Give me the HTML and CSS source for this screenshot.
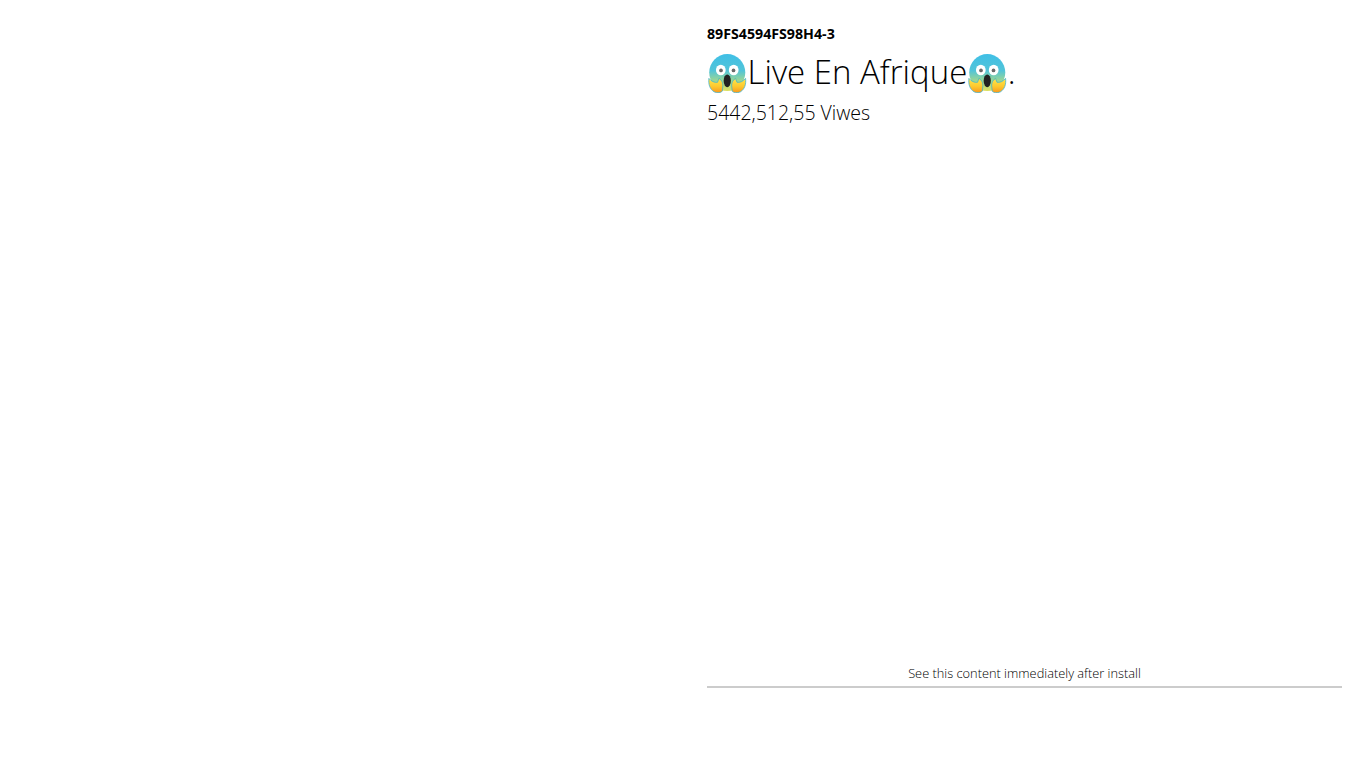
FILE: index.html
```html
<!DOCTYPE html>
<html>
<head>
  <title>Live En Afrique</title>
  <link rel="stylesheet" href="styles.css">
</head>
<body>
  <svg class="defs" width="0" height="0">
    <defs>
      <linearGradient id="faceFill" x1="0" y1="0" x2="0" y2="1">
        <stop offset="0" stop-color="#3fbfe6"/>
        <stop offset="0.45" stop-color="#52c4d8"/>
        <stop offset="0.75" stop-color="#a3d98c"/>
        <stop offset="1" stop-color="#dfe05f"/>
      </linearGradient>
      <linearGradient id="handFill" x1="0" y1="0" x2="0" y2="1">
        <stop offset="0" stop-color="#fde74c"/>
        <stop offset="0.55" stop-color="#fdc92f"/>
        <stop offset="1" stop-color="#f8991d"/>
      </linearGradient>
      <symbol id="scream" viewBox="0 0 40 40">
        <ellipse cx="20" cy="19" rx="18.500" ry="19" fill="url(#faceFill)"/>
        <ellipse cx="13.400" cy="16.500" rx="5" ry="5.400" fill="#fff"/>
        <ellipse cx="26.600" cy="16.500" rx="5" ry="5.400" fill="#fff"/>
        <circle cx="13.600" cy="16.800" r="1.900" fill="#6a6a6a"/>
        <circle cx="26.400" cy="16.800" r="1.900" fill="#6a6a6a"/>
        <ellipse cx="20" cy="27.500" rx="3.700" ry="6.500" fill="#222"/>
        <path d="M1.200 25 C0.500 31 2 36 6.500 38.800 C10 40.400 13.500 39.800 15 38 L15.500 32 C15.500 29 14 26.500 11.500 25 L10 29 C7 29.500 3.500 28 1.200 25 Z" fill="url(#handFill)" stroke="#3fb3cf" stroke-width="0.800"/>
        <path d="M38.800 25 C39.500 31 38 36 33.500 38.800 C30 40.400 26.500 39.800 25 38 L24.500 32 C24.500 29 26 26.500 28.500 25 L30 29 C33 29.500 36.500 28 38.800 25 Z" fill="url(#handFill)" stroke="#3fb3cf" stroke-width="0.800"/>
      </symbol>
    </defs>
  </svg>
  <div class="page">
    <div class="media"></div>
    <div class="detail">
      <div class="code">89FS4594FS98H4-3</div>
      <h1 class="title">
        <svg class="emoji"><use href="#scream"/></svg>Live En Afrique<svg class="emoji"><use href="#scream"/></svg>.
      </h1>
      <div class="views">5442,512,55 Viwes</div>
      <div class="note">See this content immediately after install</div>
    </div>
  </div>
</body>
</html>
```

FILE: styles.css
```css
html, body {
  margin: 0;
  padding: 0;
  background: #fff;
}
body {
  font-family: "Open Sans", sans-serif;
  color: #000;
}
.defs {
  display: block;
  height: 0;
}
.page {
  display: flex;
  height: 768px;
  overflow: hidden;
}
.media {
  width: 707px;
}
.detail {
  width: 635px;
  height: 688px;
  display: flex;
  flex-direction: column;
  padding-top: 24px;
  box-sizing: border-box;
}
.code {
  font-size: 14.2px;
  font-weight: 700;
  line-height: 20px;
}
.title {
  margin: 6px 0 0;
  font-size: 33px;
  font-weight: 300;
  line-height: 44px;
  display: flex;
  align-items: flex-start;
}
.emoji {
  width: 40.500px;
  height: 39px;
  margin-top: 4px;
  flex: none;
}
.views {
  margin-top: 5px;
  font-size: 19.500px;
  font-weight: 300;
  line-height: 28px;
}
.note {
  margin-top: auto;
  font-size: 12.800px;
  font-weight: 300;
  line-height: 18px;
  text-align: center;
  padding-bottom: 4px;
  border-bottom: 2px solid #ccc;
}
```
